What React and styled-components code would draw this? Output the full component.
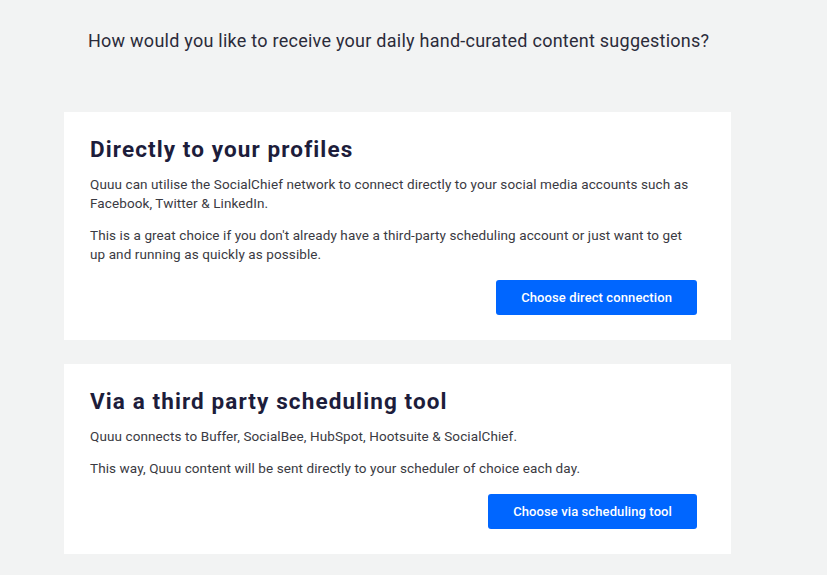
import React from "react";
import styled, { createGlobalStyle } from "styled-components";

const GlobalStyle = createGlobalStyle`
  body {
    margin: 0;
    background: #f2f3f3;
    font-family: Roboto, "Liberation Sans", sans-serif;
  }
`;

const Page = styled.main`
  padding: 29px 0 20px 64px;
  width: 667px;
`;

const Question = styled.p`
  margin: 0 0 59px 24px;
  font-size: 18px;
  line-height: 24px;
  letter-spacing: 0.25px;
  color: #2b2b3a;
`;

const Card = styled.section`
  background: #ffffff;
  padding: 23px 34px 25px 26px;
  margin-bottom: 24px;
  display: flex;
  flex-direction: column;
`;

const Title = styled.h2`
  margin: 0 0 12px;
  font-size: 22.5px;
  line-height: 28px;
  letter-spacing: 1.1px;
  font-weight: 700;
  color: #1d1d3b;
`;

const Text = styled.p`
  margin: 0 0 13px;
  font-size: 13.5px;
  line-height: 19px;
  letter-spacing: 0.1px;
  color: #3a3a42;
`;

const Button = styled.button`
  align-self: flex-end;
  margin-top: 3px;
  height: 35px;
  padding: 0 25px;
  border: none;
  border-radius: 3px;
  background: #0066ff;
  color: #ffffff;
  font-family: inherit;
  font-size: 13px;
  font-weight: 500;
  letter-spacing: 0.1px;
  cursor: pointer;
`;

const options = [
  {
    title: "Directly to your profiles",
    texts: [
      "Quuu can utilise the SocialChief network to connect directly to your social media accounts such as Facebook, Twitter & LinkedIn.",
      "This is a great choice if you don't already have a third-party scheduling account or just want to get up and running as quickly as possible.",
    ],
    action: "Choose direct connection",
  },
  {
    title: "Via a third party scheduling tool",
    texts: [
      "Quuu connects to Buffer, SocialBee, HubSpot, Hootsuite & SocialChief.",
      "This way, Quuu content will be sent directly to your scheduler of choice each day.",
    ],
    action: "Choose via scheduling tool",
  },
];

const App = () => {
  return (
    <>
      <GlobalStyle />
      <Page>
        <Question>
          How would you like to receive your daily hand-curated content
          suggestions?
        </Question>
        {options.map((o) => (
          <Card key={o.title}>
            <Title>{o.title}</Title>
            {o.texts.map((t) => (
              <Text key={t}>{t}</Text>
            ))}
            <Button type="button">{o.action}</Button>
          </Card>
        ))}
      </Page>
    </>
  );
};

export default App;
